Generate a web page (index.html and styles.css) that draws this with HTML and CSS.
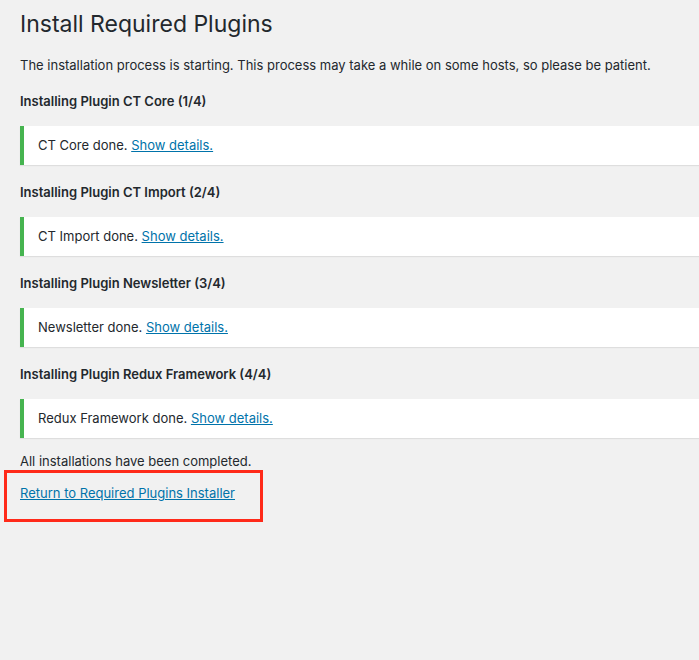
FILE: index.html
```html
<!DOCTYPE html>
<html lang="en">
<head>
<meta charset="utf-8">
<title>Install Required Plugins</title>
<link rel="stylesheet" href="styles.css">
</head>
<body>
<div class="wrap">
  <h1 class="title">Install Required Plugins</h1>
  <p class="intro">The installation process is starting. This process may take a while on some hosts, so please be patient.</p>

  <h2 class="step">Installing Plugin CT Core (1/4)</h2>
  <div class="notice"><p>CT Core done. <a href="#">Show details.</a></p></div>

  <h2 class="step">Installing Plugin CT Import (2/4)</h2>
  <div class="notice"><p>CT Import done. <a href="#">Show details.</a></p></div>

  <h2 class="step">Installing Plugin Newsletter (3/4)</h2>
  <div class="notice"><p>Newsletter done. <a href="#">Show details.</a></p></div>

  <h2 class="step">Installing Plugin Redux Framework (4/4)</h2>
  <div class="notice"><p>Redux Framework done. <a href="#">Show details.</a></p></div>

  <p class="done">All installations have been completed.</p>
  <p class="return"><a href="#">Return to Required Plugins Installer</a></p>
</div>
</body>
</html>
```
FILE: styles.css
```css
html, body {
  margin: 0;
  padding: 0;
  background: #f1f1f1;
}
body {
  font-family: Inter, "Noto Sans", "Liberation Sans", sans-serif;
  font-size: 13px;
  line-height: 1.4;
  color: #23282d;
}
.wrap {
  padding: 0 0 0 20px;
}
.title {
  margin: 0;
  padding: 10px 0 4px;
  font-size: 23px;
  font-weight: 400;
  line-height: 29px;
  color: #23282d;
}
.intro {
  margin: 13px 0 1px;
  line-height: 18px;
}
.step {
  margin: 18px 0 0;
  font-size: 13px;
  font-weight: 600;
  line-height: 18px;
}
.notice {
  margin: 16px 0 0;
  background: #fff;
  border-left: 4px solid #46b450;
  box-shadow: 0 1px 1px rgba(0,0,0,0.08);
  padding: 10px 14px;
}
.notice p {
  margin: 0;
  line-height: 19px;
}
a {
  color: #0073aa;
  text-decoration: underline;
}
.done {
  margin: 14px 0 0;
  line-height: 18px;
}
.return {
  box-sizing: border-box;
  width: 259px;
  margin: 0 0 0 -16px;
  padding: 11px 0 17px 13px;
  border: 3px solid #ff2a1a;
  line-height: 18px;
}
```
